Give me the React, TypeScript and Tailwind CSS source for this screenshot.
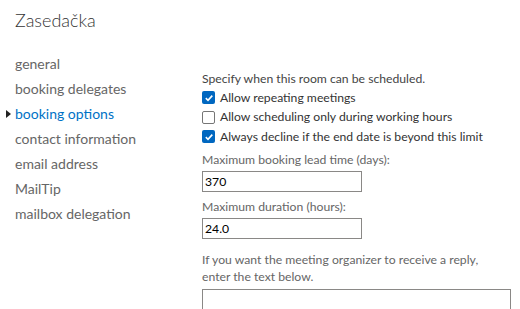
import { useState } from 'react';

const NAV = ['general', 'booking delegates', 'booking options', 'contact information', 'email address', 'MailTip', 'mailbox delegation'];

function Check({ checked, label }: { checked: boolean; label: string }) {
  return (
    <label className="flex items-center h-[19.5px] text-[12.2px] text-[#333]">
      {checked ? (
        <span className="w-[13px] h-[13px] rounded-[2px] bg-[#0067c0] flex items-center justify-center">
          <svg width="10" height="10" viewBox="0 0 10 10"><path d="M1.8 5.2 L4 7.3 L8.3 2.6" stroke="white" strokeWidth="1.6" fill="none" /></svg>
        </span>
      ) : (
        <span className="w-[13px] h-[13px] rounded-[2px] border border-[#767676] bg-white" />
      )}
      <span className="ml-[5px]">{label}</span>
    </label>
  );
}

export default function App() {
  const [active] = useState('booking options');
  return (
    <div className="w-[520px] h-[309px] overflow-hidden bg-white" style={{ fontFamily: 'Lato, sans-serif' }}>
      <div className="pl-[15px] pt-[6px] text-[18px] font-light text-[#333] leading-[28px]">Zasedačka</div>
      <div className="flex">
        <div className="w-[202px] shrink-0 pt-[17px]">
          {NAV.map(n => (
            <div key={n} className={`relative pl-[15px] h-[25px] leading-[25px] text-[14px] ${n === active ? 'text-[#0072c6]' : 'text-[#666]'}`}>
              {n === active && <span className="absolute left-[6px] top-[9px] w-0 h-0 border-y-[4px] border-y-transparent border-l-[5px] border-l-[#222]" />}
              {n}
            </div>
          ))}
        </div>
        <div className="pt-[35px] flex-1 pr-[8px]">
          <div className="text-[12.2px] text-[#444] leading-[19px]">Specify when this room can be scheduled.</div>
          <Check checked label="Allow repeating meetings" />
          <Check checked={false} label="Allow scheduling only during working hours" />
          <Check checked label="Always decline if the end date is beyond this limit" />
          <div className="mt-[3px] text-[12.2px] text-[#666] leading-[19px]">Maximum booking lead time (days):</div>
          <div className="mt-[2px] w-[160px] h-[21px] border border-[#8a8886] text-[12.2px] text-black leading-[19px] px-[2px]">370</div>
          <div className="mt-[5px] text-[12.2px] text-[#666] leading-[19px]">Maximum duration (hours):</div>
          <div className="mt-[2px] w-[160px] h-[21px] border border-[#8a8886] text-[12.2px] text-black leading-[19px] px-[2px]">24.0</div>
          <div className="mt-[12px] text-[12.2px] text-[#666] leading-[17px]">If you want the meeting organizer to receive a reply,<br />enter the text below.</div>
          <div className="mt-[4px] w-[309px] h-[40px] border border-[#8a8886]" />
        </div>
      </div>
    </div>
  );
}
